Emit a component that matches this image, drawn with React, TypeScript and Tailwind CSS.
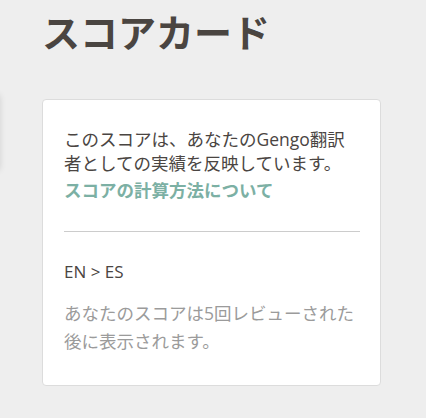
const ScoreCard: React.FC = () => {
  return (
    <div className="w-[339px] rounded-[4px] border border-[#dcdcdc] bg-white pl-[21px] pr-[20px] pt-[27px] pb-[30px]">
      <p className="pr-[6px] text-[17.5px] leading-[24px] text-[#4a4542]">
        このスコアは、あなたのGengo翻訳者としての実績を反映しています。
      </p>
      <a
        href="#"
        className="mt-[3px] block text-[17.5px] font-bold leading-[24px] text-[#7cb0a4]"
      >
        スコアの計算方法について
      </a>
      <hr className="mt-[29px] border-t border-[#cccccc]" />
      <div className="mt-[28px] text-[17px] leading-[24px] text-[#4a4542]">
        EN &gt; ES
      </div>
      <p className="mt-[15px] text-[17.5px] leading-[28px] text-[#9b9b9b]">
        あなたのスコアは5回レビューされた後に表示されます。
      </p>
    </div>
  );
};

export default function App() {
  return (
    <div
      className="relative h-[418px] w-[426px] overflow-hidden bg-[#eeeeee]"
      style={{ fontFamily: '"Open Sans", "Noto Sans CJK JP", sans-serif' }}
    >
      {/* edge of a panel just off screen */}
      <div className="absolute left-[-12px] top-[95px] h-[75px] w-[12px] shadow-[0_0_6px_rgba(0,0,0,0.12)]" />
      <div className="pl-[42px] pt-[6px]">
        <h1 className="text-[38px] font-bold leading-[52px] text-[#4a4541]">
          スコアカード
        </h1>
        <div className="mt-[41px]">
          <ScoreCard />
        </div>
      </div>
    </div>
  );
}
